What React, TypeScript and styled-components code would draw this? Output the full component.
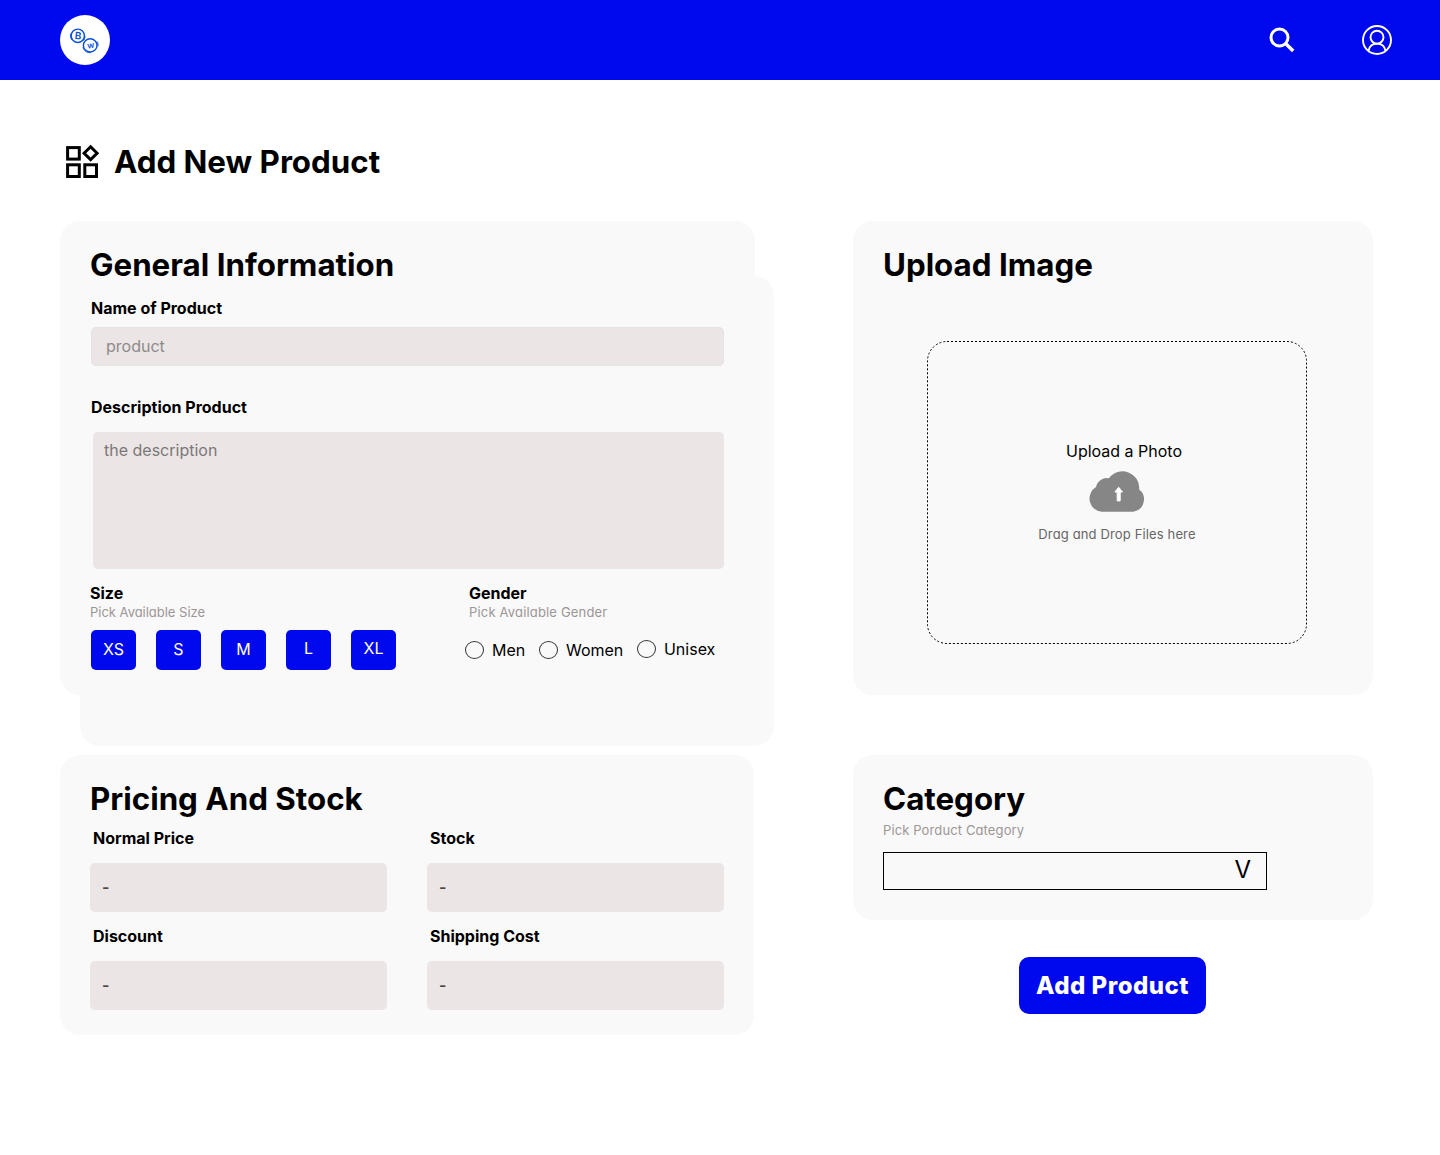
import React from 'react';
import styled, { createGlobalStyle } from 'styled-components';

const blue = '#0008ee';

const GlobalStyle = createGlobalStyle`
  *, *::before, *::after { box-sizing: border-box; }
  body {
    margin: 0;
    background: #fff;
    color: #000;
    font-family: Inter, 'Liberation Sans', sans-serif;
    font-size: 16px;
    line-height: 20px;
  }
`;

const Page = styled.div`
  width: 1440px;
  min-height: 1155px;
`;

const Header = styled.header`
  display: flex;
  align-items: center;
  height: 80px;
  padding: 0 48px 0 60px;
  background: ${blue};
`;

const Logo = styled.div`
  width: 50px;
  height: 50px;
  margin-right: auto;
  border-radius: 50%;
  background: #fff;
`;

const HeaderIcons = styled.nav`
  display: flex;
  align-items: center;
  gap: 66px;
`;

const Icon = styled.svg`
  display: block;
  flex: none;
`;

const PageTitle = styled.h1`
  display: flex;
  align-items: flex-start;
  gap: 14px;
  margin: 0;
  padding: 62px 0 0 65px;
  font-size: 31.3px;
  font-weight: 700;
  line-height: 41px;
`;

const Columns = styled.main`
  display: grid;
  grid-template-columns: 695px 520px;
  column-gap: 98px;
  align-items: start;
  padding: 38px 0 0 60px;
`;

const Column = styled.div`
  display: flex;
  flex-direction: column;
  gap: 60px;
`;

const Card = styled.section<{ $height: number; $width?: number }>`
  width: ${({ $width }) => ($width ? `${$width}px` : '100%')};
  height: ${({ $height }) => $height}px;
  padding: 24px 30px;
  border-radius: 20px;
  background: #f9f9f9;
`;

const StackedCard = styled(Card)`
  position: relative;
  &::before {
    content: '';
    position: absolute;
    z-index: -1;
    left: 20px;
    top: 55px;
    width: 694px;
    height: 470px;
    border-radius: 20px;
    background: #f9f9f9;
  }
`;

const CardTitle = styled.h2`
  margin: 0;
  font-size: 31.3px;
  font-weight: 700;
  line-height: 41px;
`;

const Label = styled.h3<{ $top?: number; $left?: number }>`
  margin: ${({ $top = 0, $left = 0 }) => `${$top}px 0 0 ${$left}px`};
  font-size: 16px;
  font-weight: 700;
  line-height: 20px;
`;

const Hint = styled.p<{ $spacing?: number; $top?: number }>`
  margin: ${({ $top = 0 }) => $top}px 0 0;
  color: #9c9696;
  font-size: 13px;
  line-height: 18px;
  letter-spacing: ${({ $spacing = 0.1 }) => $spacing}px;
  font-feature-settings: 'cv11';
`;

const NameField = styled.div`
  width: 633px;
  height: 39px;
  margin: 9px 0 0 1px;
  padding: 8px 14px;
  border: 1px solid #e3e2e4;
  border-radius: 5px;
  background: #ebe5e5;
  color: #8e8a8a;
`;

const DescriptionField = styled.div`
  width: 631px;
  height: 137px;
  margin: 15px 0 0 3px;
  padding: 8px 11px;
  border-radius: 5px;
  background: #ebe5e5;
  color: #7b7878;
`;

const Options = styled.div`
  display: grid;
  grid-template-columns: 379px 1fr;
  padding-top: 14px;
`;

const Sizes = styled.div`
  display: flex;
  gap: 20px;
  margin: 9px 0 0 1px;
`;

const SizeButton = styled.button<{ $lift?: number }>`
  width: 45px;
  height: 40px;
  padding: ${({ $lift = 0 }) => `0 0 ${2 + $lift * 2}px`};
  border: 0;
  border-radius: 5px;
  background: ${blue};
  color: #fff;
  font: 400 16px/20px Inter, sans-serif;
`;

const Genders = styled.div`
  display: flex;
  align-items: flex-start;
  gap: 13.7px;
  margin: 18px 0 0 -4px;
`;

const Gender = styled.label<{ $drop?: number }>`
  display: flex;
  align-items: center;
  gap: 8px;
  padding-top: ${({ $drop = 0 }) => $drop}px;
`;

const Radio = styled.span`
  width: 19px;
  height: 18px;
  border: 1px solid #333;
  border-radius: 50%;
`;

const PriceGrid = styled.div`
  display: grid;
  grid-template-columns: 297px 297px;
  gap: 14px 40px;
  padding-top: 8px;
`;

const ValueField = styled.div`
  height: 49px;
  margin-top: 15px;
  padding: 14px 12px;
  border-radius: 5px;
  background: #ebe5e5;
  color: #4b4848;
  font-weight: 600;
`;

const DropZone = styled.div`
  position: relative;
  display: flex;
  flex-direction: column;
  align-items: center;
  width: 380px;
  height: 303px;
  margin: 55px 0 0 44px;
  padding-top: 100px;
`;

const DropOutline = styled.svg`
  position: absolute;
  inset: 0;
`;

const DropTitle = styled.div`
  padding-left: 14px;
`;

const Cloud = styled(Icon)`
  margin-top: 10px;
`;

const DropHint = styled(Hint)`
  margin-top: 13px;
  color: #666;
`;

const Select = styled.div`
  display: flex;
  justify-content: flex-end;
  width: 384px;
  height: 38px;
  margin-top: 13px;
  padding-right: 15px;
  border: 1px solid #000;
  font-size: 24px;
  line-height: 34px;
`;

const Submit = styled.button`
  width: 187px;
  height: 57px;
  margin: -23px 0 0 166px;
  padding: 0;
  border: 0;
  border-radius: 10px;
  background: ${blue};
  color: #fff;
  font: 800 24px/30px Inter, sans-serif;
  font-feature-settings: 'cv11';
  letter-spacing: 0.5px;
`;

function LogoMark() {
  return (
    <Icon width="50" height="50" viewBox="0 0 50 50" fill="none" stroke="#0b4fdc">
      <ellipse cx="17.8" cy="20.8" rx="6.6" ry="6.7" strokeWidth="1.4" />
      <path d="M10.9 18.5c-.8 2-.4 4.5 1 6.4M23.4 25.6c1.2-1.2 1.8-3 1.4-5" strokeWidth="1" />
      <ellipse cx="30.2" cy="30.4" rx="6.8" ry="6.6" strokeWidth="1.4" />
      <path d="M23 32c.7 3.8 4 6 7.9 5.6M37 26.4c1.1 1.5 1.3 3.4.8 5.1" strokeWidth="1" />
      <g fill="#0b4fdc" stroke="none" fontFamily="Inter, sans-serif" fontWeight="600" textAnchor="middle">
        <text x="18.2" y="24.4" fontSize="10" transform="rotate(5 18 21)">B</text>
        <text x="30.6" y="33.4" fontSize="8.4" transform="rotate(-10 30 30)">w</text>
      </g>
    </Icon>
  );
}

function SearchIcon() {
  return (
    <Icon width="28" height="28" viewBox="0 0 28 28" fill="none" stroke="#fff" strokeWidth="3">
      <circle cx="11.5" cy="11.5" r="8.5" />
      <path d="M17.3 17.3l7.9 7.8" strokeWidth="3.5" />
    </Icon>
  );
}

function UserIcon() {
  return (
    <Icon width="30" height="30" viewBox="0 0 30 30" fill="none" stroke="#fff" strokeWidth="1.9">
      <circle cx="15" cy="15" r="14" />
      <circle cx="15" cy="12.2" r="6.5" />
      <path d="M6.4 26c.8-4.5 4.2-7.4 8.6-7.4s7.8 2.9 8.6 7.4" />
    </Icon>
  );
}

function WidgetsIcon() {
  return (
    <Icon width="35" height="38" viewBox="0 0 35 38" fill="none" stroke="#000" strokeWidth="3">
      <rect x="2.6" y="5.6" width="11.7" height="11.5" />
      <rect x="2.6" y="22.8" width="11.7" height="11.7" />
      <rect x="19.8" y="22.8" width="11.7" height="11.7" />
      <path d="M25.6 4.8l6.5 6.4-6.5 6.4-6.5-6.4z" />
    </Icon>
  );
}

function CloudIcon() {
  return (
    <Cloud width="56" height="41" viewBox="0 0 56 41">
      <path
        d="M13 40.8A13.3 13.3 0 0 1 7 16.1A11.2 11.2 0 0 1 20 7.3A16.7 16.7 0 0 1 50.2 18.5A12.6 12.6 0 0 1 44.4 40.8z"
        fill="#868686"
      />
      <path
        d="M29.7 16.2l3.8 4.8h-2.3v8.9h-3v-8.9h-2.3z"
        fill="#fff"
        stroke="#fff"
        strokeWidth="1"
        strokeLinejoin="round"
      />
    </Cloud>
  );
}

const sizes = [
  { name: 'XS', lift: 0 },
  { name: 'S', lift: 0 },
  { name: 'M', lift: 0 },
  { name: 'L', lift: 1 },
  { name: 'XL', lift: 1 },
];

const genders = [
  { name: 'Men', drop: 1 },
  { name: 'Women', drop: 1 },
  { name: 'Unisex', drop: 0 },
];

const prices = ['Normal Price', 'Stock', 'Discount', 'Shipping Cost'];

export default function App() {
  return (
    <Page>
      <GlobalStyle />
      <Header>
        <Logo>
          <LogoMark />
        </Logo>
        <HeaderIcons>
          <SearchIcon />
          <UserIcon />
        </HeaderIcons>
      </Header>
      <PageTitle>
        <WidgetsIcon />
        Add New Product
      </PageTitle>
      <Columns>
        <Column>
          <StackedCard $height={474}>
            <CardTitle>General Information</CardTitle>
            <Label $top={12} $left={1}>Name of Product</Label>
            <NameField>product</NameField>
            <Label $top={31} $left={1}>Description Product</Label>
            <DescriptionField>the description</DescriptionField>
            <Options>
              <div>
                <Label>Size</Label>
                <Hint $spacing={-0.02}>Pick Available Size</Hint>
                <Sizes>
                  {sizes.map(({ name, lift }) => (
                    <SizeButton key={name} $lift={lift}>{name}</SizeButton>
                  ))}
                </Sizes>
              </div>
              <div>
                <Label>Gender</Label>
                <Hint $spacing={0.17}>Pick Available Gender</Hint>
                <Genders>
                  {genders.map(({ name, drop }) => (
                    <Gender key={name} $drop={drop}>
                      <Radio />
                      {name}
                    </Gender>
                  ))}
                </Genders>
              </div>
            </Options>
          </StackedCard>
          <Card $height={280} $width={694}>
            <CardTitle>Pricing And Stock</CardTitle>
            <PriceGrid>
              {prices.map((name) => (
                <div key={name}>
                  <Label $left={3}>{name}</Label>
                  <ValueField>-</ValueField>
                </div>
              ))}
            </PriceGrid>
          </Card>
        </Column>
        <Column>
          <Card $height={474}>
            <CardTitle>Upload Image</CardTitle>
            <DropZone>
              <DropOutline width="380" height="303" fill="none" stroke="#000" strokeDasharray="2 2">
                <rect x=".5" y=".5" width="379" height="302" rx="19.5" />
              </DropOutline>
              <DropTitle>Upload a Photo</DropTitle>
              <CloudIcon />
              <DropHint $spacing={0.14}>Drag and Drop Files here</DropHint>
            </DropZone>
          </Card>
          <Card $height={165}>
            <CardTitle>Category</CardTitle>
            <Hint $top={1} $spacing={0.12}>Pick Porduct Category</Hint>
            <Select>V</Select>
          </Card>
          <Submit>Add Product</Submit>
        </Column>
      </Columns>
    </Page>
  );
}
